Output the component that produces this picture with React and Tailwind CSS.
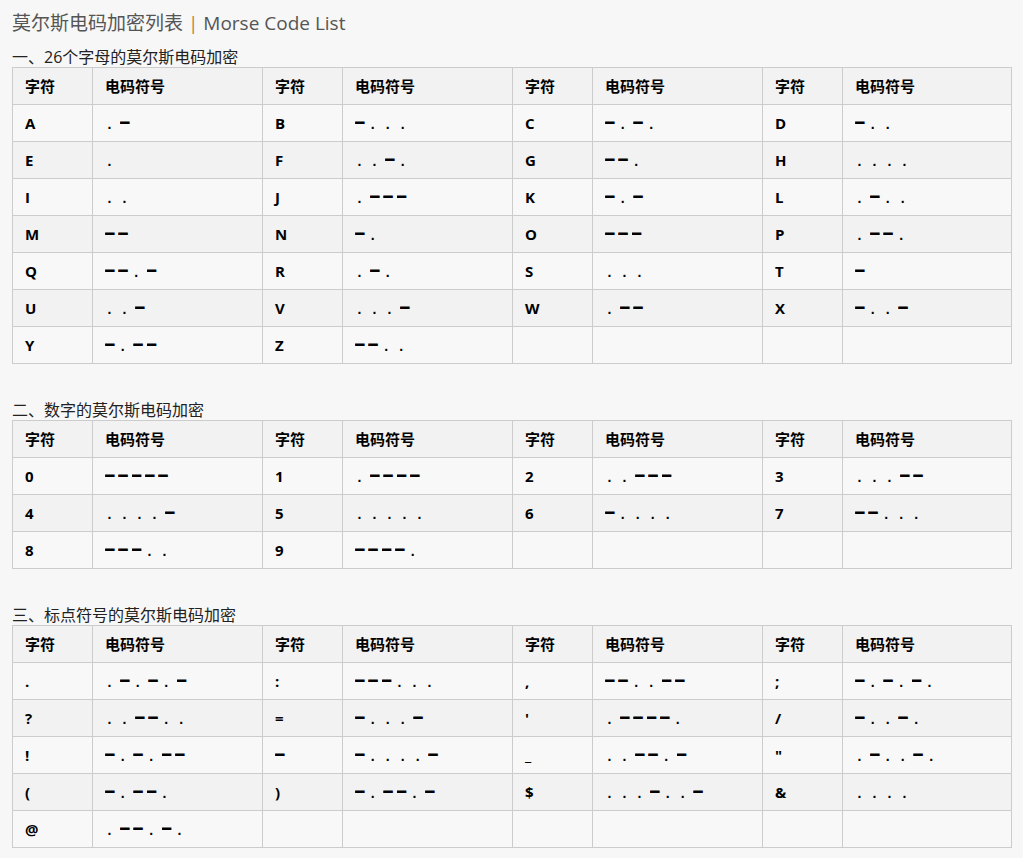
import React from "react";

const LETTERS = [
  ["A", ".-"], ["B", "-..."], ["C", "-.-."], ["D", "-.."],
  ["E", "."], ["F", "..-."], ["G", "--."], ["H", "...."],
  ["I", ".."], ["J", ".---"], ["K", "-.-"], ["L", ".-.."],
  ["M", "--"], ["N", "-."], ["O", "---"], ["P", ".--."],
  ["Q", "--.-"], ["R", ".-."], ["S", "..."], ["T", "-"],
  ["U", "..-"], ["V", "...-"], ["W", ".--"], ["X", "-..-"],
  ["Y", "-.--"], ["Z", "--.."],
];

const NUMBERS = [
  ["0", "-----"], ["1", ".----"], ["2", "..---"], ["3", "...--"],
  ["4", "....-"], ["5", "....."], ["6", "-...."], ["7", "--..."],
  ["8", "---.."], ["9", "----."],
];

const PUNCT = [
  [".", ".-.-.-"], [":", "---..."], [",", "--..--"], [";", "-.-.-."],
  ["?", "..--.."], ["=", "-...-"], ["'", ".----."], ["/", "-..-."],
  ["!", "-.-.--"], ["-", "-....-"], ["_", "..--.-"], ['"', ".-..-."],
  ["(", "-.--."], [")", "-.--.-"], ["$", "...-..-"], ["&", "...."],
  ["@", ".--.-."],
];

function chunk(list) {
  const rows = [];
  for (let i = 0; i < list.length; i += 4) {
    const r = list.slice(i, i + 4);
    while (r.length < 4) r.push(null);
    rows.push(r);
  }
  return rows;
}

function Dash() {
  return (
    <span className="inline-block w-[13.33px] overflow-hidden align-[-4px] font-['DejaVu_Sans_Mono'] text-[15.5px] font-bold leading-[20px]">
      ━
    </span>
  );
}

function Dot() {
  return (
    <span className="inline-block w-[15px] pl-[2.5px] font-['Liberation_Sans'] text-[14px] font-bold leading-[20px]">
      .
    </span>
  );
}

function Morse({ code }) {
  return (
    <span className="whitespace-nowrap leading-[20px]">
      {code.split("").map((c, i) => (c === "-" ? <Dash key={i} /> : <Dot key={i} />))}
    </span>
  );
}

function Cell({ children, bg }) {
  return (
    <div className={`flex h-[37px] items-center border-b border-r border-[#cccccc] pl-[12px] ${bg}`}>
      {children}
    </div>
  );
}

function MorseTable({ data }) {
  const rows = chunk(data);
  return (
    <div className="grid w-[1000px] grid-cols-[80px_170px_80px_170px_80px_170px_80px_169px] border-l border-t border-[#cccccc] text-[15px] font-bold text-black">
      {[0, 1, 2, 3].map((k) => (
        <React.Fragment key={"h" + k}>
          <Cell bg="bg-[#f2f2f2]">字符</Cell>
          <Cell bg="bg-[#f2f2f2]">电码符号</Cell>
        </React.Fragment>
      ))}
      {rows.map((row, ri) => {
        const bg = ri % 2 === 0 ? "bg-[#f8f8f8]" : "bg-[#f2f2f2]";
        return row.map((item, ci) => (
          <React.Fragment key={ri + "-" + ci}>
            <Cell bg={bg}>{item ? item[0] === "-" ? <Dash /> : item[0] : null}</Cell>
            <Cell bg={bg}>{item ? <Morse code={item[1]} /> : null}</Cell>
          </React.Fragment>
        ));
      })}
    </div>
  );
}

export default function App() {
  return (
    <div className="min-h-[858px] bg-[#f7f7f7] px-[12px] pt-[10px] font-['Open_Sans','Noto_Sans_CJK_SC',sans-serif] text-[#333]">
      <h1 className="h-[26px] text-[19px] font-normal leading-[26px] text-[#555]">
        莫尔斯电码加密列表 <span className="text-[#c8783a]">|</span> Morse Code List
      </h1>
      <h2 className="mt-[11px] text-[16px] font-normal leading-[20px] text-[#222]">一、26个字母的莫尔斯电码加密</h2>
      <MorseTable data={LETTERS} />
      <h2 className="mt-[36px] text-[16px] font-normal leading-[20px] text-[#222]">二、数字的莫尔斯电码加密</h2>
      <MorseTable data={NUMBERS} />
      <h2 className="mt-[36px] text-[16px] font-normal leading-[20px] text-[#222]">三、标点符号的莫尔斯电码加密</h2>
      <MorseTable data={PUNCT} />
    </div>
  );
}
